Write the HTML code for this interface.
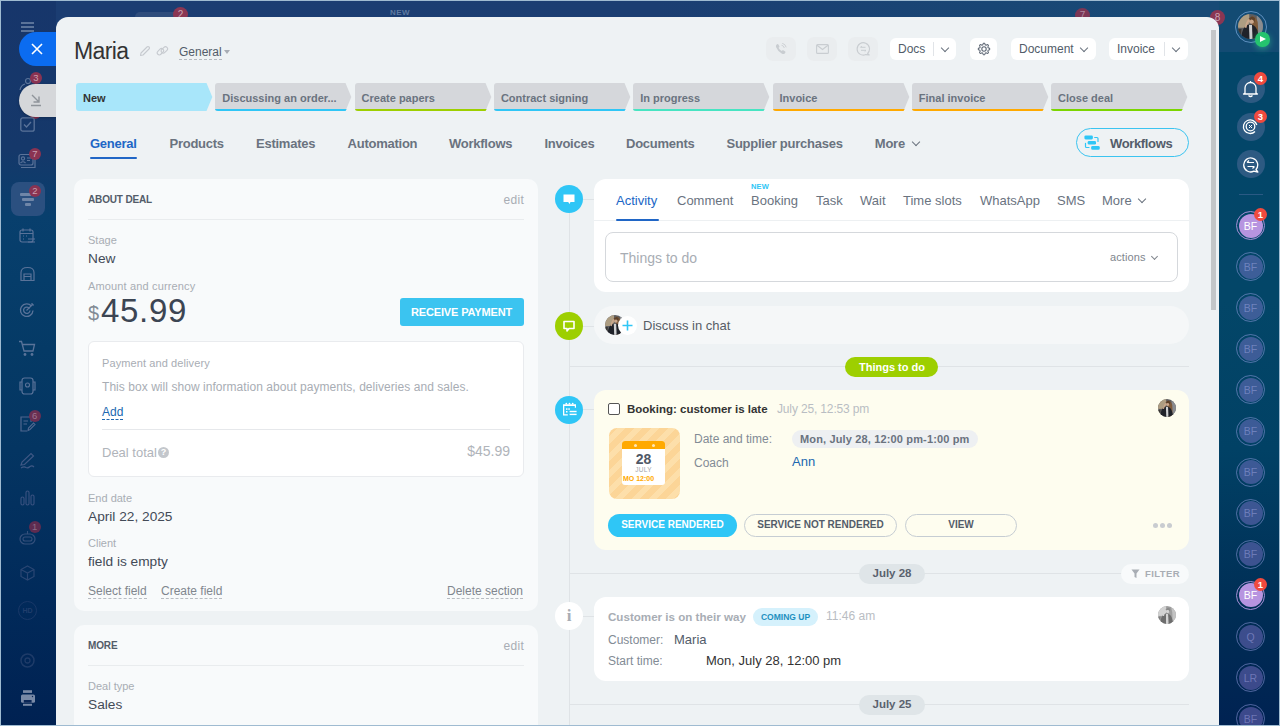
<!DOCTYPE html>
<html><head><meta charset="utf-8">
<style>
*{box-sizing:border-box;margin:0;padding:0}
html,body{width:1280px;height:726px;overflow:hidden}
body{position:relative;background:#173a6e;font-family:"Liberation Sans",sans-serif;color:#333}
.a{position:absolute}
.t{position:absolute;line-height:1;white-space:nowrap}
.b{font-weight:bold}
#frame{position:absolute;left:0;top:0;width:1280px;height:726px;border:1px solid #9fbbd1;pointer-events:none;z-index:50}
#lside{position:absolute;left:0;top:0;width:56px;height:726px;background:linear-gradient(#17366b 0px,#15386a 150px,#083f6d 215px,#063d6a 280px,#053a66 350px,#043562 450px,#012a5a 600px,#002152 726px)}
#topbar{position:absolute;left:56px;top:0;width:1164px;height:40px;background:linear-gradient(90deg,#1b3d72 0px,#1b3e72 600px,#184a76 1100px)}
#rside{position:absolute;left:1219px;top:0;width:61px;height:726px;background:linear-gradient(#034669 0px,#034669 120px,#034668 300px,#014165 450px,#002d55 615px,#002252 726px)}
#rtop{position:absolute;left:1219px;top:0;width:61px;height:52px;background:#134b73}
#panel{position:absolute;left:56px;top:17px;width:1163px;height:708px;background:#eef2f4;border-radius:12px 12px 0 0;overflow:hidden}
.stage{position:absolute;top:83px;height:28px;width:137px}
.stage svg{position:absolute;left:0;top:0}
.stage span{position:absolute;left:7px;top:10px;font-size:11px;font-weight:bold;line-height:1;color:#6a737f;white-space:nowrap}
.tab{position:absolute;top:137px;font-size:13px;letter-spacing:-0.25px;font-weight:bold;color:#6a737f;line-height:1;white-space:nowrap}
.hbtn{position:absolute;top:38px;height:22px;background:#fff;border-radius:6px}
.ibtn{position:absolute;top:37px;width:30px;height:24px;background:#eaedef;border-radius:7px}
.chev{position:absolute;width:6px;height:6px;border-right:1.3px solid #6a737f;border-bottom:1.3px solid #6a737f;transform:rotate(45deg)}
</style></head><body>
<div id="lside"></div>
<div id="topbar"></div>
<div id="rside"></div>
<div id="rtop"></div>
<div class="a" style="left:135px;top:12px;width:45px;height:10px;border-radius:5px;background:#2f4d7c"></div>
<div class="a" style="left:173px;top:7px;width:15px;height:15px;border-radius:50%;background:#8a3653;color:#c9a5b3;font-size:10px;line-height:15px;text-align:center">2</div>
<div class="t b" style="left:390px;top:9px;font-size:8px;color:#5f7aa0;letter-spacing:0.5px">NEW</div>
<div class="a" style="left:1075px;top:8px;width:15px;height:15px;border-radius:50%;background:#7c3655;color:#b08aa0;font-size:10px;line-height:15px;text-align:center">7</div>
<div class="a" style="left:1210px;top:10px;width:15px;height:15px;border-radius:50%;background:#8a3653;color:#c9a5b3;font-size:10px;line-height:15px;text-align:center">8</div>
<div class="a" style="left:21px;top:22px;width:13px;height:1.5px;background:#5a7399;box-shadow:0 4px 0 #5a7399,0 8px 0 #5a7399"></div>
<svg class="a" style="left:18px;top:77px;opacity:1" width="16" height="14" viewBox="0 0 16 14"><circle cx="10" cy="4" r="2.5" fill="none" stroke="#5a7399" stroke-width="1.2"/><path d="M2 13 Q3 8 7 7" fill="none" stroke="#5a7399" stroke-width="1.2"/></svg>
<div class="a" style="left:29.8px;top:72.3px;width:12px;height:12px;border-radius:50%;background:#8a3352;color:#c9a0b0;font-size:9.5px;line-height:12px;text-align:center">3</div>
<div class="a" style="left:29px;top:107px;width:12px;height:12px;border-radius:50%;background:#8a3352"></div>
<svg class="a" style="left:20px;top:117px;opacity:1" width="15" height="15" viewBox="0 0 15 15"><rect x="0.8" y="0.8" width="13.4" height="13.4" rx="2" fill="none" stroke="#5a7399" stroke-width="1.3"/><path d="M4 7.5 L6.5 10 L11 5" fill="none" stroke="#5a7399" stroke-width="1.3"/></svg>
<div class="a" style="left:19px;top:32px;width:40px;height:34px;border-radius:17px 0 0 17px;background:#0b6cf0"></div>
<svg class="a" style="left:31px;top:43px;opacity:1" width="12" height="12" viewBox="0 0 12 12"><path d="M1 1 L11 11 M11 1 L1 11" stroke="#fff" stroke-width="1.6"/></svg>
<div class="a" style="left:19px;top:84px;width:40px;height:33px;border-radius:17px 0 0 17px;background:#d5d7da;box-shadow:0 1px 3px rgba(0,0,0,.25)"></div>
<svg class="a" style="left:29px;top:93px;opacity:1" width="14" height="14" viewBox="0 0 14 14"><path d="M3 2 L10 9 M10 3.5 V9 H4.5 M2 12.5 H12" fill="none" stroke="#8f949a" stroke-width="1.4"/></svg>
<svg class="a" style="left:18px;top:153px;opacity:1" width="18" height="16" viewBox="0 0 18 16"><rect x="1" y="1.5" width="14" height="10.5" rx="2" fill="none" stroke="#5a7399" stroke-width="1.2"/><circle cx="5" cy="5.5" r="1.6" fill="none" stroke="#5a7399" stroke-width="1.1"/><path d="M2.5 10 Q5 7.5 7.5 10 M9 5 H13 M9 7.5 H12" fill="none" stroke="#5a7399" stroke-width="1.1"/><path d="M3 14.5 H17 V6" fill="none" stroke="#5a7399" stroke-width="1.2"/></svg>
<div class="a" style="left:28.8px;top:147.7px;width:12px;height:12px;border-radius:50%;background:#8a3352;color:#c9a0b0;font-size:9.5px;line-height:12px;text-align:center">7</div>
<div class="a" style="left:11px;top:182px;width:34px;height:34px;border-radius:8px;background:#2b5080"></div>
<div class="a" style="left:20px;top:193px;width:15px;height:2.5px;border-radius:1px;background:#6f86a8"></div><div class="a" style="left:22px;top:198.3px;width:12px;height:2.5px;border-radius:1px;background:#6f86a8"></div>
<div class="a" style="left:25px;top:203.4px;width:6px;height:2.5px;border-radius:1px;background:#6f86a8"></div>
<div class="a" style="left:28.8px;top:184.5px;width:12px;height:12px;border-radius:50%;background:#8a3352;color:#c9a0b0;font-size:9.5px;line-height:12px;text-align:center">2</div>
<svg class="a" style="left:19px;top:228px;opacity:1" width="17" height="16" viewBox="0 0 17 16"><rect x="1" y="2" width="13" height="12" rx="2" fill="none" stroke="#5a7399" stroke-width="1.2"/><path d="M4 0.5 V3.5 M11 0.5 V3.5 M1 5.5 H14 M9 11 H16 M9 14 H16" stroke="#5a7399" stroke-width="1.2"/><path d="M4 8 h1 M7 8 h1 M4 11 h1" stroke="#5a7399" stroke-width="1.2"/></svg>
<svg class="a" style="left:20px;top:266px;opacity:1" width="15" height="16" viewBox="0 0 15 16"><path d="M1 14.5 V6.5 Q1 1.5 7.5 1.5 Q14 1.5 14 6.5 V14.5 Z" fill="none" stroke="#5a7399" stroke-width="1.2"/><path d="M4 14.5 V8 H11 V14.5 M4 10.5 H11" fill="none" stroke="#5a7399" stroke-width="1.2"/></svg>
<svg class="a" style="left:19px;top:302px;opacity:1" width="17" height="16" viewBox="0 0 17 16"><path d="M12.5 4 A6.3 6.3 0 1 0 14 8.5" fill="none" stroke="#5a7399" stroke-width="1.3"/><path d="M10.5 6.5 A3.2 3.2 0 1 0 11 8.5" fill="none" stroke="#5a7399" stroke-width="1.3"/><path d="M7.5 8.5 L14 2 M13 1 V3 H15" fill="none" stroke="#5a7399" stroke-width="1.2"/></svg>
<svg class="a" style="left:18px;top:340px;opacity:1" width="18" height="17" viewBox="0 0 18 17"><path d="M1 1.5 H3.5 L6 11 H15 L16.5 4.5 H4.5" fill="none" stroke="#5a7399" stroke-width="1.3"/><circle cx="7" cy="14.5" r="1.4" fill="#5a7399"/><circle cx="14" cy="14.5" r="1.4" fill="#5a7399"/></svg>
<svg class="a" style="left:19px;top:377px;opacity:1" width="17" height="18" viewBox="0 0 17 18"><rect x="3" y="1" width="11" height="16" rx="2.5" fill="none" stroke="#5a7399" stroke-width="1.2"/><path d="M3 5 H1 V13 H3 M14 5 H16 V13 H14" fill="none" stroke="#5a7399" stroke-width="1.2"/><circle cx="8.5" cy="8" r="2" fill="none" stroke="#5a7399" stroke-width="1.1"/></svg>
<svg class="a" style="left:20px;top:416px;opacity:1" width="16" height="16" viewBox="0 0 16 16"><path d="M11 6 V1 H1 V15 H7" fill="none" stroke="#4f678f" stroke-width="1.2"/><path d="M3.5 5 H8 M3.5 8 H7" stroke="#4f678f" stroke-width="1.1"/><path d="M8 14.5 L8.5 12 L13.5 7 L15 8.5 L10 13.5 Z" fill="none" stroke="#4f678f" stroke-width="1.1"/></svg>
<div class="a" style="left:28.7px;top:410px;width:12px;height:12px;border-radius:50%;background:#6a2f52;color:#9a7590;font-size:9.5px;line-height:12px;text-align:center">6</div>
<svg class="a" style="left:19px;top:452px;opacity:1" width="18" height="17" viewBox="0 0 18 17"><path d="M2 13 L3 10 L12 1.5 L14.5 4 L5.5 12.5 Z" fill="none" stroke="#3f5885" stroke-width="1.2"/><path d="M2 16 Q5 14 7 15.5 Q9 16.5 11 14.5 Q13 13 15 15" fill="none" stroke="#3f5885" stroke-width="1.1"/></svg>
<svg class="a" style="left:20px;top:490px;opacity:1" width="15" height="16" viewBox="0 0 15 16"><rect x="1" y="7" width="3" height="8" rx="1.5" fill="none" stroke="#3a5281" stroke-width="1.1"/><rect x="6" y="1" width="3" height="14" rx="1.5" fill="none" stroke="#3a5281" stroke-width="1.1"/><rect x="11" y="5" width="3" height="10" rx="1.5" fill="none" stroke="#3a5281" stroke-width="1.1"/></svg>
<svg class="a" style="left:19px;top:530px;opacity:1" width="17" height="15" viewBox="0 0 17 15"><rect x="1" y="4" width="15" height="10" rx="5" fill="none" stroke="#34507c" stroke-width="1.2"/><rect x="4" y="7" width="9" height="4" rx="2" fill="none" stroke="#34507c" stroke-width="1.1"/><path d="M8.5 4 V1" stroke="#34507c" stroke-width="1.1"/></svg>
<div class="a" style="left:28.7px;top:521.3px;width:12px;height:12px;border-radius:50%;background:#5e2c50;color:#8a6a85;font-size:9.5px;line-height:12px;text-align:center">1</div>
<svg class="a" style="left:20px;top:565px;opacity:1" width="15" height="16" viewBox="0 0 15 16"><path d="M7.5 1 L14 4.5 V11.5 L7.5 15 L1 11.5 V4.5 Z M1 4.5 L7.5 8 L14 4.5 M7.5 8 V15" fill="none" stroke="#2a4673" stroke-width="1.2"/></svg>
<div class="a" style="left:18px;top:601px;width:19px;height:19px;border-radius:50%;border:1px solid #193868"></div>
<div class="t b" style="left:18px;top:607px;width:19px;text-align:center;font-size:7px;color:#203e6c">HD</div>
<svg class="a" style="left:19px;top:652px;opacity:1" width="17" height="17" viewBox="0 0 17 17"><circle cx="8.5" cy="8.5" r="6.5" fill="none" stroke="#1e3b68" stroke-width="1.5"/><circle cx="8.5" cy="8.5" r="2.5" fill="none" stroke="#1e3b68" stroke-width="1.3"/></svg>
<svg class="a" style="left:20px;top:689px;opacity:1" width="16" height="18" viewBox="0 0 16 18"><rect x="3" y="1.2" width="9" height="2.7" fill="#7889a6"/><rect x="1" y="5.5" width="14" height="8.2" rx="1.5" fill="#7889a6"/><rect x="3.8" y="11" width="7.8" height="2.7" fill="#0a2656"/><rect x="3" y="14.8" width="9" height="2" fill="#7889a6"/><circle cx="12.5" cy="7.5" r="0.7" fill="#0a2656"/></svg>
<div class="a" style="left:1234.5px;top:11px;width:32px;height:32px;border-radius:50%;border:1px solid #5f90c0"></div>
<svg class="a" style="left:1238px;top:14px" width="25" height="25" viewBox="0 0 100 100"><defs><clipPath id="av1"><circle cx="50" cy="50" r="50"/></clipPath></defs><g clip-path="url(#av1)"><rect width="100" height="100" fill="#5d5d60"/><rect x="0" y="0" width="45" height="55" fill="#ad9d82"/><rect x="75" y="0" width="25" height="100" fill="#8a8c90"/><path d="M55 8 Q82 12 80 50 Q82 85 74 100 H52 Q60 60 52 25 Z" fill="#7e5a3a"/><ellipse cx="54" cy="26" rx="10" ry="13" fill="#caa78c"/><path d="M42 20 Q54 2 68 16 L66 34 Q58 14 46 28 Z" fill="#5d412a"/><path d="M12 100 Q16 50 40 42 L60 44 Q80 52 84 100 Z" fill="#1f2229"/><path d="M44 44 L56 44 L58 100 H46 Z" fill="#cfd0d2"/><path d="M30 55 Q36 30 46 22" stroke="#caa78c" stroke-width="7" fill="none"/><path d="M0 60 H14 L10 100 H0 Z" fill="#3a3733"/></g></svg>
<div class="a" style="left:1255px;top:32px;width:14.5px;height:14.5px;border-radius:50%;background:#25c46e;box-shadow:0 2px 6px rgba(60,220,150,.5)"></div>
<div class="a" style="left:1260px;top:36px;width:0;height:0;border-left:6px solid #fff;border-top:3.5px solid transparent;border-bottom:3.5px solid transparent"></div>
<div class="a" style="left:1237px;top:75px;width:28px;height:28px;border-radius:50%;background:#2d5a82"></div>
<div class="a" style="left:1237px;top:112.5px;width:28px;height:28px;border-radius:50%;background:#2d5a82"></div>
<div class="a" style="left:1237px;top:150px;width:28px;height:28px;border-radius:50%;background:#2d5a82"></div>
<svg class="a" style="left:1242px;top:80px;opacity:1" width="17" height="18" viewBox="0 0 17 18"><path d="M3 13 V8 A5.5 5.5 0 0 1 14 8 V13 L15.5 14 H1.5 Z" fill="none" stroke="#fff" stroke-width="1.3" stroke-linejoin="round"/><path d="M6.5 15.5 Q8.5 17.5 10.5 15.5" fill="none" stroke="#fff" stroke-width="1.2"/><path d="M8.5 1 V2.5" stroke="#fff" stroke-width="1.3"/></svg>
<svg class="a" style="left:1242px;top:118px;opacity:1" width="17" height="17" viewBox="0 0 17 17"><path d="M13 13.5 A6.8 6.8 0 1 1 14.8 7" fill="none" stroke="#fff" stroke-width="1.3"/><circle cx="8.5" cy="8.5" r="4.3" fill="none" stroke="#fff" stroke-width="1.3"/><path d="M7 7 L10 10 M10 7 L7 10" stroke="#fff" stroke-width="1"/></svg>
<svg class="a" style="left:1242px;top:156px;opacity:1" width="17" height="17" viewBox="0 0 17 17"><path d="M14 13.5 A7 7 0 1 0 11.8 15.2 L15.8 16 Z" fill="none" stroke="#fff" stroke-width="1.3" stroke-linejoin="round"/><path d="M5 6.5 H12 M5 6.5 L7 4.5 M12.5 10.5 H5.5 M12.5 10.5 L10.5 12.5" fill="none" stroke="#fff" stroke-width="1.2"/></svg>
<div class="a" style="left:1254px;top:72px;width:13px;height:13px;border-radius:50%;background:#f04a3e;color:#fff;font-size:9.5px;line-height:13px;text-align:center;font-weight:bold">4</div>
<div class="a" style="left:1254px;top:110px;width:13px;height:13px;border-radius:50%;background:#f04a3e;color:#fff;font-size:9.5px;line-height:13px;text-align:center;font-weight:bold">3</div>
<div class="a" style="left:1239px;top:194px;width:24px;height:1px;background:#2a5a84"></div>
<div class="a" style="left:1236px;top:211.0px;width:29px;height:29px;border-radius:50%;border:1.3px solid #a58fd6"></div>
<div class="a" style="left:1238.5px;top:213.5px;width:24px;height:24px;border-radius:50%;background:#b794e0;color:#fff;font-size:10.5px;line-height:24px;text-align:center">BF</div>
<div class="a" style="left:1236px;top:252.1px;width:29px;height:29px;border-radius:50%;border:1.2px solid rgba(160,165,235,0.5)"></div>
<div class="a" style="left:1238.5px;top:254.6px;width:24px;height:24px;border-radius:50%;background:rgba(150,130,225,0.4);color:rgba(190,190,250,0.4);font-size:10.5px;line-height:24px;text-align:center">BF</div>
<div class="a" style="left:1236px;top:293.2px;width:29px;height:29px;border-radius:50%;border:1.2px solid rgba(160,165,235,0.5)"></div>
<div class="a" style="left:1238.5px;top:295.7px;width:24px;height:24px;border-radius:50%;background:rgba(150,130,225,0.4);color:rgba(190,190,250,0.4);font-size:10.5px;line-height:24px;text-align:center">BF</div>
<div class="a" style="left:1236px;top:334.3px;width:29px;height:29px;border-radius:50%;border:1.2px solid rgba(160,165,235,0.5)"></div>
<div class="a" style="left:1238.5px;top:336.8px;width:24px;height:24px;border-radius:50%;background:rgba(150,130,225,0.4);color:rgba(190,190,250,0.4);font-size:10.5px;line-height:24px;text-align:center">BF</div>
<div class="a" style="left:1236px;top:375.4px;width:29px;height:29px;border-radius:50%;border:1.2px solid rgba(160,165,235,0.5)"></div>
<div class="a" style="left:1238.5px;top:377.9px;width:24px;height:24px;border-radius:50%;background:rgba(150,130,225,0.4);color:rgba(190,190,250,0.4);font-size:10.5px;line-height:24px;text-align:center">BF</div>
<div class="a" style="left:1236px;top:416.5px;width:29px;height:29px;border-radius:50%;border:1.2px solid rgba(160,165,235,0.5)"></div>
<div class="a" style="left:1238.5px;top:419.0px;width:24px;height:24px;border-radius:50%;background:rgba(150,130,225,0.4);color:rgba(190,190,250,0.4);font-size:10.5px;line-height:24px;text-align:center">BF</div>
<div class="a" style="left:1236px;top:457.6px;width:29px;height:29px;border-radius:50%;border:1.2px solid rgba(160,165,235,0.5)"></div>
<div class="a" style="left:1238.5px;top:460.1px;width:24px;height:24px;border-radius:50%;background:rgba(150,130,225,0.4);color:rgba(190,190,250,0.4);font-size:10.5px;line-height:24px;text-align:center">BF</div>
<div class="a" style="left:1236px;top:498.7px;width:29px;height:29px;border-radius:50%;border:1.2px solid rgba(160,165,235,0.5)"></div>
<div class="a" style="left:1238.5px;top:501.2px;width:24px;height:24px;border-radius:50%;background:rgba(150,130,225,0.4);color:rgba(190,190,250,0.4);font-size:10.5px;line-height:24px;text-align:center">BF</div>
<div class="a" style="left:1236px;top:539.8px;width:29px;height:29px;border-radius:50%;border:1.2px solid rgba(160,165,235,0.5)"></div>
<div class="a" style="left:1238.5px;top:542.3px;width:24px;height:24px;border-radius:50%;background:rgba(150,130,225,0.4);color:rgba(190,190,250,0.4);font-size:10.5px;line-height:24px;text-align:center">BF</div>
<div class="a" style="left:1236px;top:580.9px;width:29px;height:29px;border-radius:50%;border:1.3px solid #a58fd6"></div>
<div class="a" style="left:1238.5px;top:583.4px;width:24px;height:24px;border-radius:50%;background:#b794e0;color:#fff;font-size:10.5px;line-height:24px;text-align:center">BF</div>
<div class="a" style="left:1236px;top:622.0px;width:29px;height:29px;border-radius:50%;border:1.2px solid rgba(160,165,235,0.5)"></div>
<div class="a" style="left:1238.5px;top:624.5px;width:24px;height:24px;border-radius:50%;background:rgba(150,130,225,0.4);color:rgba(190,190,250,0.4);font-size:10.5px;line-height:24px;text-align:center">Q</div>
<div class="a" style="left:1236px;top:663.1px;width:29px;height:29px;border-radius:50%;border:1.2px solid rgba(160,165,235,0.5)"></div>
<div class="a" style="left:1238.5px;top:665.6px;width:24px;height:24px;border-radius:50%;background:rgba(150,130,225,0.4);color:rgba(190,190,250,0.4);font-size:10.5px;line-height:24px;text-align:center">LR</div>
<div class="a" style="left:1236px;top:704.2px;width:29px;height:29px;border-radius:50%;border:1.2px solid rgba(160,165,235,0.5)"></div>
<div class="a" style="left:1238.5px;top:706.7px;width:24px;height:24px;border-radius:50%;background:rgba(150,130,225,0.4);color:rgba(190,190,250,0.4);font-size:10.5px;line-height:24px;text-align:center">BF</div>
<div class="a" style="left:1254px;top:208px;width:13px;height:13px;border-radius:50%;background:#f04a3e;color:#fff;font-size:9.5px;line-height:13px;text-align:center;font-weight:bold">1</div>
<div class="a" style="left:1254px;top:577.9px;width:13px;height:13px;border-radius:50%;background:#f04a3e;color:#fff;font-size:9.5px;line-height:13px;text-align:center;font-weight:bold">1</div>
<div id="panel"></div>

<!-- HEADER -->
<div class="t" style="left:74px;top:40px;font-size:23px;letter-spacing:-0.6px;color:#333">Maria</div>
<svg class="a" style="left:139px;top:45px" width="12" height="12" viewBox="0 0 12 12"><path d="M1.5 10.5 L2 8 L8 2 Q9 1 10 2 Q11 3 10 4 L4 10 Z" fill="none" stroke="#c6cacf" stroke-width="1.1" stroke-linejoin="round"/></svg>
<svg class="a" style="left:156px;top:45px" width="13" height="13" viewBox="0 0 13 13"><rect x="0.8" y="4.6" width="7.2" height="4.2" rx="2.1" transform="rotate(-45 4.4 6.7)" fill="none" stroke="#c6cacf" stroke-width="1.1"/><rect x="4.8" y="2.8" width="7.2" height="4.2" rx="2.1" transform="rotate(-45 8.4 4.9)" fill="none" stroke="#c6cacf" stroke-width="1.1"/></svg>
<div class="t" style="left:179px;top:46px;font-size:12px;color:#525c69;border-bottom:1px dashed #b5bac0;padding-bottom:1px">General</div>
<div class="a" style="left:224px;top:50px;width:0;height:0;border-left:3.5px solid transparent;border-right:3.5px solid transparent;border-top:4px solid #a8adb4"></div>

<div class="ibtn" style="left:766px"></div>
<div class="ibtn" style="left:807px"></div>
<div class="ibtn" style="left:848px"></div>
<svg class="a" style="left:775px;top:43px" width="12" height="12" viewBox="0 0 12 12"><path d="M1.5 1.8 Q2.2 0.8 3.2 1.2 L4.4 3.2 Q4.6 3.9 4 4.4 L3.5 4.8 Q4.5 6.8 6.6 8 L7.1 7.5 Q7.6 7 8.3 7.3 L10.3 8.6 Q10.8 9.4 10 10.3 L9.4 10.8 Q8.5 11.4 7 10.7 Q2.8 8.5 1 4 Q0.6 2.6 1.5 1.8 Z" fill="#c9cdd1"/><path d="M6.5 2.2 A3.5 3.5 0 0 1 9.3 5 M7.2 0.3 A5.5 5.5 0 0 1 11.2 4.3" fill="none" stroke="#c9cdd1" stroke-width="0.9"/></svg>
<svg class="a" style="left:816px;top:44px" width="13" height="10" viewBox="0 0 13 10"><rect x="0.6" y="0.6" width="11.8" height="8.8" rx="1" fill="none" stroke="#c9cdd1" stroke-width="1.1"/><path d="M1 1.2 L6.5 5.5 L12 1.2" fill="none" stroke="#c9cdd1" stroke-width="1.1"/></svg>
<svg class="a" style="left:856px;top:42px" width="15" height="15" viewBox="0 0 15 15"><path d="M11.6 11.4 A6.2 6.2 0 1 0 9.8 12.6 L13.2 12.9 Z" fill="none" stroke="#c9cdd1" stroke-width="1.1" stroke-linejoin="round"/><path d="M4.5 5.3 H9.5 M4.5 5.3 L5.8 4 M10 8.3 H5 M10 8.3 L8.7 9.6" fill="none" stroke="#c9cdd1" stroke-width="1"/></svg>

<div class="hbtn" style="left:890px;width:66px"></div>
<div class="t" style="left:898px;top:43px;font-size:12px;color:#525c69">Docs</div>
<div class="a" style="left:933px;top:42px;width:1px;height:14px;background:#e1e4e8"></div>
<div class="chev" style="left:942px;top:45px"></div>
<div class="hbtn" style="left:970px;width:27px"></div>
<svg class="a" style="left:974.5px;top:39.8px" width="18" height="18" viewBox="0 0 18 18"><path d="M14.70 9.00 L14.70 9.22 L14.68 9.45 L14.62 9.67 L14.28 9.84 L13.90 9.98 L13.53 10.09 L13.18 10.18 L13.09 10.33 L13.03 10.49 L12.97 10.65 L12.91 10.80 L12.83 10.95 L12.79 11.12 L12.97 11.43 L13.16 11.78 L13.33 12.14 L13.44 12.50 L13.33 12.70 L13.19 12.87 L13.03 13.03 L12.87 13.19 L12.70 13.33 L12.50 13.44 L12.14 13.33 L11.78 13.16 L11.43 12.97 L11.12 12.79 L10.95 12.83 L10.80 12.91 L10.65 12.97 L10.49 13.03 L10.33 13.09 L10.18 13.18 L10.09 13.53 L9.98 13.90 L9.84 14.28 L9.67 14.62 L9.45 14.68 L9.22 14.70 L9.00 14.70 L8.78 14.70 L8.55 14.68 L8.33 14.62 L8.16 14.28 L8.02 13.90 L7.91 13.53 L7.82 13.18 L7.67 13.09 L7.51 13.03 L7.35 12.97 L7.20 12.91 L7.05 12.83 L6.88 12.79 L6.57 12.97 L6.22 13.16 L5.86 13.33 L5.50 13.44 L5.30 13.33 L5.13 13.19 L4.97 13.03 L4.81 12.87 L4.67 12.70 L4.56 12.50 L4.67 12.14 L4.84 11.78 L5.03 11.43 L5.21 11.12 L5.17 10.95 L5.09 10.80 L5.03 10.65 L4.97 10.49 L4.91 10.33 L4.82 10.18 L4.47 10.09 L4.10 9.98 L3.72 9.84 L3.38 9.67 L3.32 9.45 L3.30 9.22 L3.30 9.00 L3.30 8.78 L3.32 8.55 L3.38 8.33 L3.72 8.16 L4.10 8.02 L4.47 7.91 L4.82 7.82 L4.91 7.67 L4.97 7.51 L5.03 7.35 L5.09 7.20 L5.17 7.05 L5.21 6.88 L5.03 6.57 L4.84 6.22 L4.67 5.86 L4.56 5.50 L4.67 5.30 L4.81 5.13 L4.97 4.97 L5.13 4.81 L5.30 4.67 L5.50 4.56 L5.86 4.67 L6.22 4.84 L6.57 5.03 L6.88 5.21 L7.05 5.17 L7.20 5.09 L7.35 5.03 L7.51 4.97 L7.67 4.91 L7.82 4.82 L7.91 4.47 L8.02 4.10 L8.16 3.72 L8.33 3.38 L8.55 3.32 L8.78 3.30 L9.00 3.30 L9.22 3.30 L9.45 3.32 L9.67 3.38 L9.84 3.72 L9.98 4.10 L10.09 4.47 L10.18 4.82 L10.33 4.91 L10.49 4.97 L10.65 5.03 L10.80 5.09 L10.95 5.17 L11.12 5.21 L11.43 5.03 L11.78 4.84 L12.14 4.67 L12.50 4.56 L12.70 4.67 L12.87 4.81 L13.03 4.97 L13.19 5.13 L13.33 5.30 L13.44 5.50 L13.33 5.86 L13.16 6.22 L12.97 6.57 L12.79 6.88 L12.83 7.05 L12.91 7.20 L12.97 7.35 L13.03 7.51 L13.09 7.67 L13.18 7.82 L13.53 7.91 L13.90 8.02 L14.28 8.16 L14.62 8.33 L14.68 8.55 L14.70 8.78 Z" fill="none" stroke="#5f6875" stroke-width="1.05" stroke-linejoin="round"/><circle cx="9" cy="9" r="2.2" fill="none" stroke="#5f6875" stroke-width="1.1"/></svg>
<div class="hbtn" style="left:1011px;width:85px"></div>
<div class="t" style="left:1019px;top:43px;font-size:12px;color:#525c69">Document</div>
<div class="chev" style="left:1081px;top:45px"></div>
<div class="hbtn" style="left:1109px;width:79px"></div>
<div class="t" style="left:1117px;top:43px;font-size:12px;color:#525c69">Invoice</div>
<div class="a" style="left:1164px;top:42px;width:1px;height:14px;background:#e1e4e8"></div>
<div class="chev" style="left:1173px;top:45px"></div>

<!-- STAGES -->
<div class="stage" style="left:76.0px"><svg width="137" height="28" viewBox="0 0 137 28"><path d="M3 0 H130.5 L136.3 14 L130.5 28 H3 Q0 28 0 25 V3 Q0 0 3 0 Z" fill="#a8e6fa"/></svg><span style="color:#333">New</span></div>
<div class="stage" style="left:215.3px"><svg width="137" height="28" viewBox="0 0 137 28"><path d="M3 0 H130.5 L136.3 14 L130.5 28 H3 Q0 28 0 25 V3 Q0 0 3 0 Z" fill="#d5d7db"/><path d="M0 25.5 Q0 28 3 28 H130.5 L131.7 26 H0 Z" fill="#2fc6f6"/></svg><span>Discussing an order...</span></div>
<div class="stage" style="left:354.6px"><svg width="137" height="28" viewBox="0 0 137 28"><path d="M3 0 H130.5 L136.3 14 L130.5 28 H3 Q0 28 0 25 V3 Q0 0 3 0 Z" fill="#d5d7db"/><path d="M0 25.5 Q0 28 3 28 H130.5 L131.7 26 H0 Z" fill="#9dcf00"/></svg><span>Create papers</span></div>
<div class="stage" style="left:493.9px"><svg width="137" height="28" viewBox="0 0 137 28"><path d="M3 0 H130.5 L136.3 14 L130.5 28 H3 Q0 28 0 25 V3 Q0 0 3 0 Z" fill="#d5d7db"/><path d="M0 25.5 Q0 28 3 28 H130.5 L131.7 26 H0 Z" fill="#2fc6f6"/></svg><span>Contract signing</span></div>
<div class="stage" style="left:633.2px"><svg width="137" height="28" viewBox="0 0 137 28"><path d="M3 0 H130.5 L136.3 14 L130.5 28 H3 Q0 28 0 25 V3 Q0 0 3 0 Z" fill="#d5d7db"/><path d="M0 25.5 Q0 28 3 28 H130.5 L131.7 26 H0 Z" fill="#47e4c2"/></svg><span>In progress</span></div>
<div class="stage" style="left:772.5px"><svg width="137" height="28" viewBox="0 0 137 28"><path d="M3 0 H130.5 L136.3 14 L130.5 28 H3 Q0 28 0 25 V3 Q0 0 3 0 Z" fill="#d5d7db"/><path d="M0 25.5 Q0 28 3 28 H130.5 L131.7 26 H0 Z" fill="#ffa900"/></svg><span>Invoice</span></div>
<div class="stage" style="left:911.8px"><svg width="137" height="28" viewBox="0 0 137 28"><path d="M3 0 H130.5 L136.3 14 L130.5 28 H3 Q0 28 0 25 V3 Q0 0 3 0 Z" fill="#d5d7db"/><path d="M0 25.5 Q0 28 3 28 H130.5 L131.7 26 H0 Z" fill="#ffa900"/></svg><span>Final invoice</span></div>
<div class="stage" style="left:1051.1px"><svg width="137" height="28" viewBox="0 0 137 28"><path d="M3 0 H130.5 L136.3 14 L130.5 28 H3 Q0 28 0 25 V3 Q0 0 3 0 Z" fill="#d5d7db"/><path d="M0 25.5 Q0 28 3 28 H130.5 L131.7 26 H0 Z" fill="#7bd500"/></svg><span>Close deal</span></div>

<!-- TABS -->
<div class="tab" style="left:90px;color:#2066c6">General</div>
<div class="tab" style="left:169.5px">Products</div>
<div class="tab" style="left:256px">Estimates</div>
<div class="tab" style="left:347.6px">Automation</div>
<div class="tab" style="left:449px">Workflows</div>
<div class="tab" style="left:544.4px">Invoices</div>
<div class="tab" style="left:626px">Documents</div>
<div class="tab" style="left:726.5px">Supplier purchases</div>
<div class="tab" style="left:874.8px">More</div>
<div class="chev" style="left:913px;top:139px"></div>
<div class="a" style="left:90px;top:157px;width:47px;height:2px;background:#2066c6;border-radius:1px"></div>
<div class="a" style="left:1076px;top:128px;width:113px;height:29px;border:1.2px solid #3bc4f0;border-radius:15px"></div>
<svg class="a" style="left:1084px;top:135px" width="17" height="16" viewBox="0 0 17 16"><rect x="0.4" y="0.5" width="8.5" height="3.9" rx="1.3" fill="#2fc6f6"/><rect x="3.7" y="5.9" width="8.3" height="3.7" rx="1.3" fill="#2fc6f6"/><rect x="7.2" y="10.9" width="8.5" height="3.8" rx="1.3" fill="#2fc6f6"/><path d="M10.7 2.5 H13 Q14 2.5 14 3.5 V6.5 M1.5 8.3 V11.5 Q1.5 12.5 2.5 12.5 H5" fill="none" stroke="#2fc6f6" stroke-width="1.2" stroke-linecap="round"/></svg>
<div class="t b" style="left:1110px;top:137px;font-size:13px;letter-spacing:-0.35px;color:#535c69">Workflows</div>

<div class="a" style="left:74px;top:179px;width:464px;height:432px;background:#f8fafb;border-radius:10px"></div>
<div class="t b" style="left:88px;top:195px;font-size:10px;color:#535c69;letter-spacing:-0.15px">ABOUT DEAL</div>
<div class="t" style="left:503.5px;top:194px;font-size:12px;color:#a8adb4;letter-spacing:0.35px">edit</div>
<div class="a" style="left:88px;top:219px;width:436px;height:1px;background:#e9ecee"></div>
<div class="t" style="left:88px;top:235px;font-size:11px;color:#a8adb4">Stage</div>
<div class="t" style="left:88px;top:252px;font-size:13.7px;color:#434a57">New</div>
<div class="t" style="left:88px;top:281px;font-size:11px;color:#a8adb4;letter-spacing:0.15px">Amount and currency</div>
<div class="t" style="left:88px;top:303px;font-size:20px;color:#828b95">$</div>
<div class="t" style="left:101px;top:294px;font-size:33px;color:#3c4553;letter-spacing:0.7px">45.99</div>
<div class="a" style="left:400px;top:298px;width:124px;height:28px;background:#3bc4f0;border-radius:3px"></div>
<div class="t b" style="left:411px;top:307px;font-size:11px;color:#fff;letter-spacing:-0.15px">RECEIVE PAYMENT</div>
<div class="a" style="left:88px;top:341px;width:436px;height:136px;background:#fff;border:1px solid #e9ebee;border-radius:6px"></div>
<div class="t" style="left:102px;top:358px;font-size:11px;color:#a8adb4;letter-spacing:0.1px">Payment and delivery</div>
<div class="t" style="left:102px;top:381px;font-size:12px;color:#a8adb4;letter-spacing:0.05px">This box will show information about payments, deliveries and sales.</div>
<div class="t" style="left:102px;top:406px;font-size:12px;color:#2067b0;border-bottom:1px dashed #2067b0;padding-bottom:1px">Add</div>
<div class="a" style="left:102px;top:429px;width:408px;height:1px;background:#e6e8eb"></div>
<div class="t" style="left:102px;top:446px;font-size:13px;color:#b0b4ba">Deal total</div>
<div class="a" style="left:158px;top:447px;width:11px;height:11px;border-radius:50%;background:#c3c7cc;color:#fff;font-size:9px;font-weight:bold;line-height:11px;text-align:center">?</div>
<div class="t" style="left:440px;top:444px;width:70px;text-align:right;font-size:14px;color:#b0b4ba">$45.99</div>
<div class="t" style="left:88px;top:493px;font-size:11px;color:#a8adb4">End date</div>
<div class="t" style="left:88px;top:510px;font-size:13.7px;color:#434a57">April 22, 2025</div>
<div class="t" style="left:88px;top:538px;font-size:11px;color:#a8adb4">Client</div>
<div class="t" style="left:88px;top:555px;font-size:13.7px;color:#434a57">field is empty</div>
<div class="t" style="left:88px;top:585px;font-size:12px;color:#80868e;border-bottom:1px dashed #b8bcc2;padding-bottom:1px">Select field</div>
<div class="t" style="left:161px;top:585px;font-size:12px;color:#80868e;border-bottom:1px dashed #b8bcc2;padding-bottom:1px">Create field</div>
<div class="t" style="left:447px;top:585px;font-size:12px;color:#80868e;border-bottom:1px dashed #b8bcc2;padding-bottom:1px">Delete section</div>

<div class="a" style="left:74px;top:625px;width:464px;height:120px;background:#f8fafb;border-radius:10px"></div>
<div class="t b" style="left:88px;top:641px;font-size:10px;color:#535c69;letter-spacing:-0.15px">MORE</div>
<div class="t" style="left:503.5px;top:640px;font-size:12px;color:#a8adb4;letter-spacing:0.35px">edit</div>
<div class="a" style="left:88px;top:665px;width:436px;height:1px;background:#e9ecee"></div>
<div class="t" style="left:88px;top:681px;font-size:11px;color:#a8adb4">Deal type</div>
<div class="t" style="left:88px;top:698px;font-size:13.7px;color:#434a57">Sales</div>


<!-- timeline line -->
<div class="a" style="left:569px;top:199px;width:1px;height:530px;background:#dfe3e6"></div>
<div class="a" style="left:583px;top:199px;width:11px;height:1px;background:#dfe3e6"></div>
<div class="a" style="left:583px;top:326px;width:11px;height:1px;background:#dfe3e6"></div>
<div class="a" style="left:583px;top:409px;width:11px;height:1px;background:#dfe3e6"></div>
<div class="a" style="left:583px;top:616px;width:11px;height:1px;background:#dfe3e6"></div>
<!-- activity card -->
<div class="a" style="left:555px;top:185px;width:28px;height:28px;border-radius:50%;background:#2fc6f6"></div>
<svg class="a" style="left:562px;top:192px" width="14" height="14" viewBox="0 0 14 14"><path d="M1.5 2.5 H12.5 V10 H8.5 L7.5 12 L6.2 10 H1.5 Z" fill="#fff"/></svg>
<div class="a" style="left:594px;top:179px;width:595px;height:113px;background:#fff;border-radius:12px"></div>
<div class="a" style="left:594px;top:220px;width:595px;height:1px;background:#edf0f2"></div>
<div class="t" style="left:616px;top:194px;font-size:13px;color:#2066c6">Activity</div>
<div class="a" style="left:616px;top:219px;width:43px;height:2px;background:#2066c6;border-radius:1px"></div>
<div class="t" style="left:677px;top:194px;font-size:13px;color:#6a737f">Comment</div>
<div class="t b" style="left:751px;top:183px;font-size:7.5px;color:#2fc6f6;letter-spacing:0.2px">NEW</div>
<div class="t" style="left:751px;top:194px;font-size:13px;color:#6a737f">Booking</div>
<div class="t" style="left:816px;top:194px;font-size:13px;color:#6a737f">Task</div>
<div class="t" style="left:860px;top:194px;font-size:13px;color:#6a737f">Wait</div>
<div class="t" style="left:903px;top:194px;font-size:13px;color:#6a737f">Time slots</div>
<div class="t" style="left:980px;top:194px;font-size:13px;color:#6a737f">WhatsApp</div>
<div class="t" style="left:1057px;top:194px;font-size:13px;color:#6a737f">SMS</div>
<div class="t" style="left:1102px;top:194px;font-size:13px;color:#6a737f">More</div>
<div class="chev" style="left:1139px;top:196px"></div>
<div class="a" style="left:605px;top:232px;width:573px;height:50px;border:1px solid #d5d8dc;border-radius:8px;background:#fff"></div>
<div class="t" style="left:620px;top:251px;font-size:14px;color:#a8adb4">Things to do</div>
<div class="t" style="left:1110px;top:252px;font-size:11px;color:#80868e;letter-spacing:0.1px">actions</div>
<div class="chev" style="left:1152px;top:254px;width:5px;height:5px;border-color:#80868e;border-width:0 1px 1px 0"></div>
<!-- discuss in chat -->
<div class="a" style="left:555px;top:312px;width:28px;height:28px;border-radius:50%;background:#9dcf00"></div>
<svg class="a" style="left:562px;top:319px" width="14" height="14" viewBox="0 0 14 14"><path d="M2 2.5 H12 V9.5 H7 L5 12 V9.5 H2 Z" fill="none" stroke="#fff" stroke-width="1.6" stroke-linejoin="round"/></svg>
<div class="a" style="left:594px;top:306px;width:595px;height:38px;background:#f5f7f8;border-radius:19px"></div>
<svg class="a" style="left:604.5px;top:315px" width="20" height="20" viewBox="0 0 100 100"><defs><clipPath id="av2"><circle cx="50" cy="50" r="50"/></clipPath></defs><g clip-path="url(#av2)"><rect width="100" height="100" fill="#5d5d60"/><rect x="0" y="0" width="45" height="55" fill="#ad9d82"/><rect x="75" y="0" width="25" height="100" fill="#8a8c90"/><path d="M55 8 Q82 12 80 50 Q82 85 74 100 H52 Q60 60 52 25 Z" fill="#7e5a3a"/><ellipse cx="54" cy="26" rx="10" ry="13" fill="#caa78c"/><path d="M42 20 Q54 2 68 16 L66 34 Q58 14 46 28 Z" fill="#5d412a"/><path d="M12 100 Q16 50 40 42 L60 44 Q80 52 84 100 Z" fill="#1f2229"/><path d="M44 44 L56 44 L58 100 H46 Z" fill="#cfd0d2"/><path d="M30 55 Q36 30 46 22" stroke="#caa78c" stroke-width="7" fill="none"/><path d="M0 60 H14 L10 100 H0 Z" fill="#3a3733"/></g></svg>
<div class="a" style="left:617.5px;top:315.5px;width:19.5px;height:19.5px;border-radius:50%;background:#fff"></div>
<svg class="a" style="left:621.5px;top:319.5px" width="11" height="11" viewBox="0 0 11 11"><path d="M5.5 0.5 V10.5 M0.5 5.5 H10.5" stroke="#2fc6f6" stroke-width="1.6"/></svg>
<div class="t" style="left:643px;top:319px;font-size:13px;color:#575d66">Discuss in chat</div>
<!-- things to do pill -->
<div class="a" style="left:569px;top:366px;width:620px;height:1px;background:#dfe3e6"></div>
<div class="a" style="left:845px;top:357px;width:93px;height:20px;border-radius:10px;background:#9dcf00"></div>
<div class="t b" style="left:859px;top:362px;font-size:11px;color:#fff">Things to do</div>
<!-- booking card -->
<div class="a" style="left:555px;top:396px;width:28px;height:28px;border-radius:50%;background:#2fc6f6"></div>
<svg class="a" style="left:555px;top:396px" width="28" height="28" viewBox="0 0 28 28"><path d="M8 8.3 H21 V11.8 H19.8 V10 H9.3 V18.3 H12.8 V19.6 H8 Z" fill="#fff"/><circle cx="11.3" cy="7.6" r="0.9" fill="#fff"/><circle cx="14.5" cy="7.6" r="0.9" fill="#fff"/><circle cx="17.7" cy="7.6" r="0.9" fill="#fff"/><rect x="11" y="12.3" width="1.5" height="1.5" fill="#fff"/><rect x="13.3" y="12.3" width="1.5" height="1.5" fill="#fff"/><rect x="11" y="15" width="1.5" height="1.5" fill="#fff"/><rect x="14.6" y="14.8" width="7" height="1.4" fill="#fff"/><rect x="14.6" y="17.7" width="7" height="1.4" fill="#fff"/></svg>
<div class="a" style="left:594px;top:390px;width:595px;height:160px;background:#fefdef;border-radius:12px"></div>
<div class="a" style="left:608px;top:403px;width:12px;height:12px;border:1px solid #555;border-radius:2px;background:#fff"></div>
<div class="t b" style="left:627px;top:404px;font-size:11.5px;color:#333">Booking: customer is late</div>
<div class="t" style="left:777px;top:403px;font-size:12px;color:#b9bdc3;letter-spacing:-0.15px">July 25, 12:53 pm</div>
<svg class="a" style="left:1158px;top:399px" width="18" height="18" viewBox="0 0 100 100"><defs><clipPath id="av3"><circle cx="50" cy="50" r="50"/></clipPath></defs><g clip-path="url(#av3)"><rect width="100" height="100" fill="#5d5d60"/><rect x="0" y="0" width="45" height="55" fill="#ad9d82"/><rect x="75" y="0" width="25" height="100" fill="#8a8c90"/><path d="M55 8 Q82 12 80 50 Q82 85 74 100 H52 Q60 60 52 25 Z" fill="#7e5a3a"/><ellipse cx="54" cy="26" rx="10" ry="13" fill="#caa78c"/><path d="M42 20 Q54 2 68 16 L66 34 Q58 14 46 28 Z" fill="#5d412a"/><path d="M12 100 Q16 50 40 42 L60 44 Q80 52 84 100 Z" fill="#1f2229"/><path d="M44 44 L56 44 L58 100 H46 Z" fill="#cfd0d2"/><path d="M30 55 Q36 30 46 22" stroke="#caa78c" stroke-width="7" fill="none"/><path d="M0 60 H14 L10 100 H0 Z" fill="#3a3733"/></g></svg>
<div class="a" style="left:609px;top:428px;width:71px;height:71px;border-radius:8px;background:repeating-linear-gradient(135deg,#fcd597 0 6px,#fddfaa 6px 12px)"></div>
<div class="a" style="left:622px;top:441px;width:43px;height:44px;background:#fff;border-radius:3px;overflow:hidden">
  <div class="a" style="left:0;top:0;width:45px;height:8px;background:#ffa900"></div>
  <div class="a" style="left:12px;top:3px;width:3px;height:3px;border-radius:50%;background:#fde7b8"></div>
  <div class="a" style="left:30px;top:3px;width:3px;height:3px;border-radius:50%;background:#fde7b8"></div>
  <div class="t b" style="left:0;top:10.5px;width:43px;text-align:center;font-size:14px;color:#4f5866">28</div>
  <div class="t" style="left:0;top:26px;width:43px;text-align:center;font-size:6.5px;color:#a0a5ac;letter-spacing:0.3px">JULY</div>
  <div class="t b" style="left:1px;top:34px;font-size:7px;color:#ffa900">MO 12:00</div>
</div>
<div class="t" style="left:694px;top:433px;font-size:12px;color:#828b95">Date and time:</div>
<div class="a" style="left:792px;top:430px;width:186px;height:18px;border-radius:9px;background:#eef0f2"></div>
<div class="t b" style="left:800px;top:434px;font-size:11px;color:#6a737f;letter-spacing:0.15px">Mon, July 28, 12:00 pm-1:00 pm</div>
<div class="t" style="left:694px;top:457px;font-size:12px;color:#828b95">Coach</div>
<div class="t" style="left:792px;top:455px;font-size:13px;color:#2067b0">Ann</div>
<div class="a" style="left:608px;top:513.5px;width:129px;height:23px;border-radius:11.5px;background:#2fc6f6"></div>
<div class="t b" style="left:608px;top:520px;width:129px;text-align:center;font-size:10px;color:#fff">SERVICE RENDERED</div>
<div class="a" style="left:744px;top:513.5px;width:153px;height:23px;border-radius:11.5px;border:1px solid #c6cdd3"></div>
<div class="t b" style="left:744px;top:520px;width:153px;text-align:center;font-size:10px;color:#535c69">SERVICE NOT RENDERED</div>
<div class="a" style="left:905px;top:513.5px;width:112px;height:23px;border-radius:11.5px;border:1px solid #c6cdd3"></div>
<div class="t b" style="left:905px;top:520px;width:112px;text-align:center;font-size:10px;color:#535c69">VIEW</div>
<div class="a" style="left:1153px;top:523px;width:5px;height:5px;border-radius:50%;background:#c9ccd0;box-shadow:7px 0 0 #c9ccd0,14px 0 0 #c9ccd0"></div>
<!-- july 28 -->
<div class="a" style="left:569px;top:573px;width:620px;height:1px;background:#dfe3e6"></div>
<div class="a" style="left:859px;top:564px;width:66px;height:20px;border-radius:10px;background:#dfe5e8"></div>
<div class="t b" style="left:859px;top:568px;width:66px;text-align:center;font-size:11.5px;color:#5a626e">July 28</div>
<div class="a" style="left:1121px;top:564px;width:68px;height:20px;border-radius:10px;background:#f8fafb"></div>
<svg class="a" style="left:1131px;top:569px" width="9" height="10" viewBox="0 0 9 10"><path d="M0.5 0.5 H8.5 L5.5 4.5 V9 L3.5 8 V4.5 Z" fill="#a8adb4"/></svg>
<div class="t b" style="left:1145px;top:569px;font-size:9.5px;color:#a8adb4;letter-spacing:0.4px">FILTER</div>
<!-- info card -->
<div class="a" style="left:555px;top:602px;width:28px;height:28px;border-radius:50%;background:#fff"></div>
<div class="t b" style="left:555px;top:607px;width:28px;text-align:center;font-size:17px;color:#a8adb4;font-family:'Liberation Serif',serif">i</div>
<div class="a" style="left:594px;top:597px;width:595px;height:84px;background:#fff;border-radius:12px"></div>
<div class="t b" style="left:608px;top:611px;font-size:11.6px;color:#a8adb4">Customer is on their way</div>
<div class="a" style="left:753px;top:608px;width:65px;height:18px;border-radius:9px;background:#d5f1fc"></div>
<div class="t b" style="left:753px;top:613px;width:65px;text-align:center;font-size:8.5px;color:#1e90c0">COMING UP</div>
<div class="t" style="left:826px;top:610px;font-size:12px;color:#b9bdc3">11:46 am</div>
<svg class="a" style="left:1158px;top:606px;filter:grayscale(1) brightness(1.6) contrast(0.6);opacity:0.85" width="18" height="18" viewBox="0 0 100 100"><defs><clipPath id="av4"><circle cx="50" cy="50" r="50"/></clipPath></defs><g clip-path="url(#av4)"><rect width="100" height="100" fill="#5d5d60"/><rect x="0" y="0" width="45" height="55" fill="#ad9d82"/><rect x="75" y="0" width="25" height="100" fill="#8a8c90"/><path d="M55 8 Q82 12 80 50 Q82 85 74 100 H52 Q60 60 52 25 Z" fill="#7e5a3a"/><ellipse cx="54" cy="26" rx="10" ry="13" fill="#caa78c"/><path d="M42 20 Q54 2 68 16 L66 34 Q58 14 46 28 Z" fill="#5d412a"/><path d="M12 100 Q16 50 40 42 L60 44 Q80 52 84 100 Z" fill="#1f2229"/><path d="M44 44 L56 44 L58 100 H46 Z" fill="#cfd0d2"/><path d="M30 55 Q36 30 46 22" stroke="#caa78c" stroke-width="7" fill="none"/><path d="M0 60 H14 L10 100 H0 Z" fill="#3a3733"/></g></svg>
<div class="t" style="left:608px;top:634px;font-size:12px;color:#828b95">Customer:</div>
<div class="t" style="left:674px;top:633px;font-size:13px;color:#525c69">Maria</div>
<div class="t" style="left:608px;top:655px;font-size:12px;color:#828b95">Start time:</div>
<div class="t" style="left:706px;top:654px;font-size:13px;color:#333">Mon, July 28, 12:00 pm</div>
<!-- july 25 -->
<div class="a" style="left:569px;top:704px;width:620px;height:1px;background:#dfe3e6"></div>
<div class="a" style="left:859px;top:695px;width:66px;height:20px;border-radius:10px;background:#dfe5e8"></div>
<div class="t b" style="left:859px;top:699px;width:66px;text-align:center;font-size:11.5px;color:#5a626e">July 25</div>


<div class="a" style="left:1211px;top:30px;width:5px;height:280px;background:#c3c6c8"></div>

<div id="frame"></div>
</body></html>
